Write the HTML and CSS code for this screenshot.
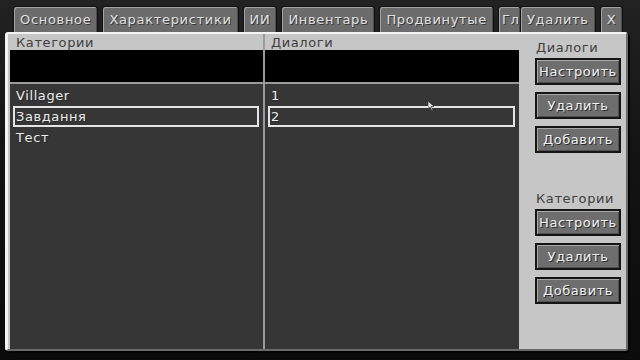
FILE: index.html
```html
<!DOCTYPE html>
<html lang="ru">
<head>
  <meta charset="UTF-8">
  <title>Диалоги</title>
  <link rel="stylesheet" href="styles.css">
</head>
<body>
  <div class="screen">
    <nav class="tabs">
      <div class="tab">Основное</div>
      <div class="tab">Характеристики</div>
      <div class="tab">ИИ</div>
      <div class="tab">Инвентарь</div>
      <div class="tab">Продвинутые</div>
      <div class="tab tab-clipped">Гл</div>
      <div class="tab">Удалить</div>
      <div class="tab">X</div>
    </nav>

    <main class="panel">
      <section class="lists">
        <div class="column">
          <div class="col-title">Категории</div>
          <div class="search"></div>
          <ul class="list">
            <li>Villager</li>
            <li class="selected">Завдання</li>
            <li>Тест</li>
          </ul>
        </div>
        <div class="column">
          <div class="col-title">Диалоги</div>
          <div class="search"></div>
          <ul class="list">
            <li>1</li>
            <li class="selected">2</li>
          </ul>
        </div>
      </section>

      <aside class="side">
        <div class="group">
          <div class="group-title">Диалоги</div>
          <button class="btn">Настроить</button>
          <button class="btn">Удалить</button>
          <button class="btn">Добавить</button>
        </div>
        <div class="group">
          <div class="group-title">Категории</div>
          <button class="btn">Настроить</button>
          <button class="btn">Удалить</button>
          <button class="btn">Добавить</button>
        </div>
      </aside>
    </main>

    <svg class="cursor" width="7" height="10" viewBox="0 0 7 10">
      <path d="M0 0 L0 8 L2 6 L4 10 L5 9 L3 5.5 L6 5.5 Z" fill="#e6e6e6" stroke="#222" stroke-width="0.6"/>
    </svg>
  </div>
</body>
</html>
```

FILE: styles.css
```css
/* Экран редактора диалогов */
* {
  box-sizing: border-box;
}

body {
  margin: 0;
  background: #0e0e0e;
  font-family: 'DejaVu Sans', sans-serif;
  font-size: 13px;
}

.screen {
  position: relative;
  width: 640px;
  height: 360px;
  overflow: hidden;
  background: linear-gradient(#222 0%, #141414 40%, #0b0b0b 100%);
}

/* Вкладки */
.tabs {
  display: flex;
  gap: 4px;
  height: 32px;
  padding: 6px 0 0 13px;
}

.tab {
  height: 26px;
  padding: 0 6px;
  background: #6c6c6c;
  border: 1px solid #111;
  border-bottom: none;
  border-radius: 3px 3px 0 0;
  box-shadow: inset 1px 1px 0 #a5a5a5, inset -1px 0 0 #4c4c4c;
  color: #e0e0e0;
  line-height: 25px;
  letter-spacing: 0.68px;
  white-space: nowrap;
  text-shadow: 1px 1px 0 #383838;
}

.tab-clipped {
  width: 23px;
  padding: 0 0 0 3px;
  overflow: hidden;
  margin-right: -5px;
}

/* Основная панель */
.panel {
  display: flex;
  width: 623px;
  height: 319px;
  margin-left: 5px;
  padding-left: 2px;
  background: #c6c6c6;
  border-top: 2px solid #f4f4f4;
  border-left: 3px solid #f4f4f4;
  border-right: 2px solid #6a6a6a;
  border-bottom: 2px solid #6a6a6a;
  border-radius: 3px;
  box-shadow: 2px 2px 0 #050505;
}

.lists {
  display: flex;
}

.column {
  display: flex;
  flex-direction: column;
  width: 255px;
  border-right: 2px solid #9a9a9a;
}

.column + .column {
  width: 254px;
  border-right: none;
}

.col-title {
  height: 16px;
  padding-left: 6px;
  color: #404040;
  line-height: 17px;
  letter-spacing: 0.6px;
}

.search {
  height: 34px;
  background: #000;
  border-bottom: 2px solid #9a9a9a;
}

.list {
  flex: 1;
  margin: 0;
  padding: 1px 0 0;
  list-style: none;
  background: #363636;
}

.list li {
  height: 21px;
  margin: 0 4px 0 3px;
  padding-left: 1px;
  border: 2px solid transparent;
  color: #ececec;
  line-height: 17px;
  letter-spacing: 0.6px;
  text-shadow: 1px 1px 0 #2a2a2a;
}

.list li.selected {
  border-color: #e4e4e4;
}

/* Кнопки справа */
.side {
  display: flex;
  flex-direction: column;
  gap: 36px;
  padding: 4px 0 0 16px;
}

.group {
  display: flex;
  flex-direction: column;
  gap: 7px;
}

.group-title {
  height: 13px;
  padding-left: 1px;
  color: #404040;
  line-height: 20px;
  letter-spacing: 0.6px;
}

.btn {
  width: 86px;
  height: 27px;
  padding: 0;
  background: #6e6e6e;
  border: 2px solid #151515;
  box-shadow: inset 1px 1px 0 #a8a8a8, inset -1px -1px 0 #505050;
  color: #f0f0f0;
  font-family: inherit;
  font-size: 13px;
  letter-spacing: 0.6px;
  white-space: nowrap;
  text-shadow: 1px 1px 0 #2c2c2c;
}

.cursor {
  position: absolute;
  left: 428px;
  top: 101px;
}
```
